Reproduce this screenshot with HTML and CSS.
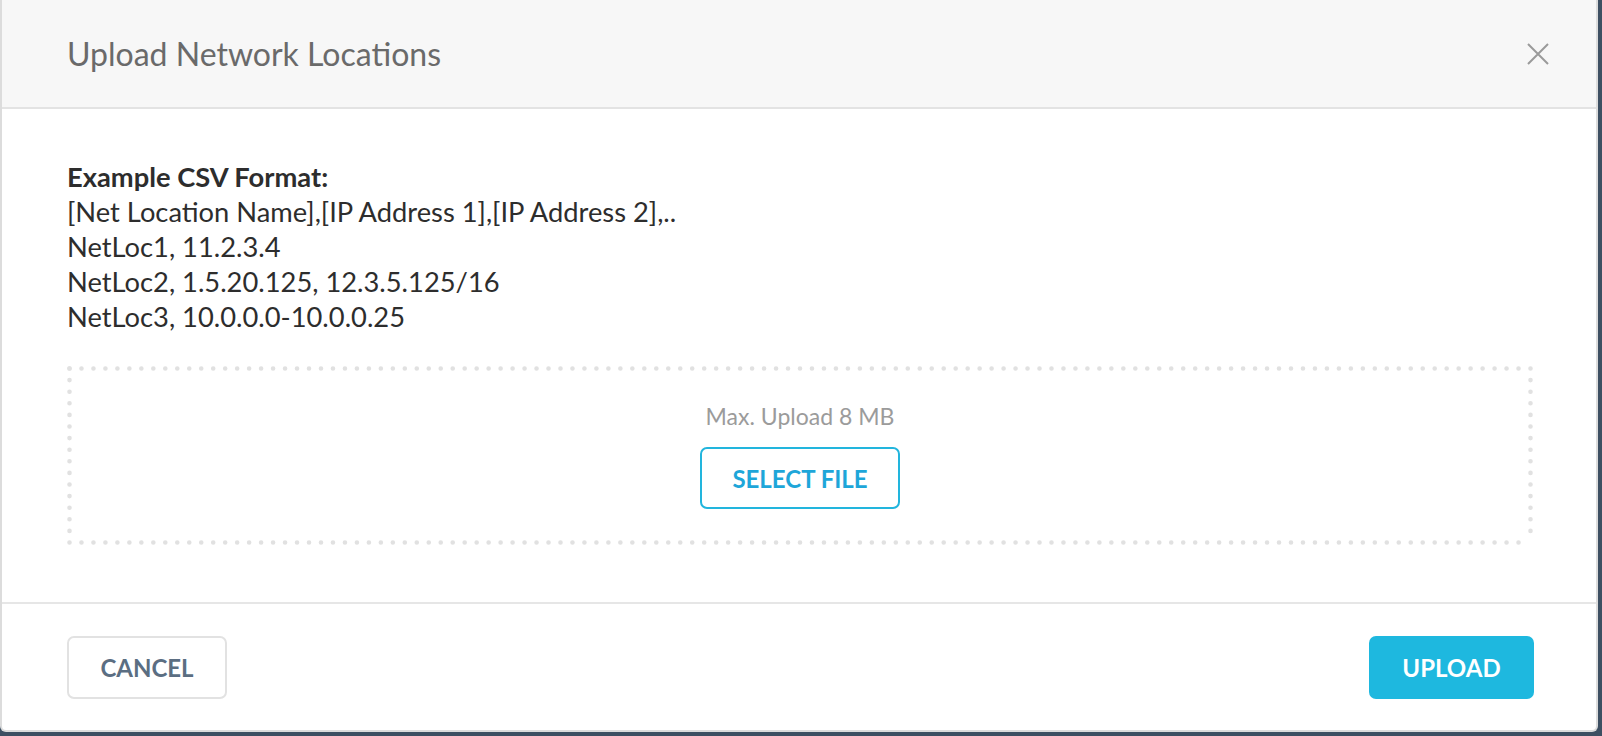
FILE: index.html
```html
<!DOCTYPE html>
<html lang="en">
<head>
<meta charset="utf-8">
<title>Upload Network Locations</title>
<link rel="stylesheet" href="styles.css">
</head>
<body>
<div class="modal">
  <div class="modal-header">
    <h1 class="modal-title">Upload Network Locations</h1>
    <button class="close-btn" aria-label="Close">
      <svg width="22" height="22" viewBox="0 0 22 22"><path d="M1 1 L21 21 M21 1 L1 21" stroke="#9a9a9a" stroke-width="2" fill="none"/></svg>
    </button>
  </div>
  <div class="modal-body">
    <div class="csv-example">
      <div class="csv-title">Example CSV Format:</div>
      <div>[Net Location Name],[IP Address 1],[IP Address 2],..</div>
      <div>NetLoc1, 11.2.3.4</div>
      <div>NetLoc2, 1.5.20.125, 12.3.5.125/16</div>
      <div>NetLoc3, 10.0.0.0-10.0.0.25</div>
    </div>
    <div class="dropzone">
      <svg class="dz-dots" width="1466" height="179" viewBox="0 0 1466 179">
        <g stroke="#e1e1e1" stroke-width="4.6" stroke-linecap="round" stroke-dasharray="0 1" fill="none">
          <line x1="2.5" y1="2.5" x2="1463.5" y2="2.5" pathLength="122"/>
          <line x1="2.5" y1="176.5" x2="1463.5" y2="176.5" pathLength="122"/>
          <line x1="2.5" y1="2.5" x2="2.5" y2="176.5" pathLength="15"/>
          <line x1="1463.5" y1="2.5" x2="1463.5" y2="176.5" pathLength="15"/>
        </g>
      </svg>
      <div class="dz-hint">Max. Upload 8 MB</div>
      <button class="btn btn-outline">SELECT FILE</button>
    </div>
  </div>
  <div class="modal-footer">
    <button class="btn btn-cancel">CANCEL</button>
    <button class="btn btn-primary">UPLOAD</button>
  </div>
</div>
</body>
</html>
```
FILE: styles.css
```css
html, body {
  margin: 0;
  padding: 0;
}
body {
  background: #3d4f62;
  width: 1602px;
  height: 736px;
  overflow: hidden;
  font-family: Lato, "Open Sans", "Liberation Sans", sans-serif;
}
.modal {
  box-sizing: border-box;
  width: 1598px;
  height: 732px;
  background: #fff;
  border: 2px solid #dcdcdc;
  border-top: none;
  border-radius: 0 0 6px 6px;
  display: flex;
  flex-direction: column;
  overflow: hidden;
}
.modal-header {
  box-sizing: border-box;
  height: 109px;
  flex: none;
  background: #f7f7f7;
  border-bottom: 2px solid #e3e3e3;
  display: flex;
  align-items: center;
  justify-content: space-between;
  padding: 0 47px 0 65px;
}
.modal-title {
  margin: 0;
  font-size: 32px;
  font-weight: 400;
  color: #6a6a6a;
  line-height: 1;
}
.close-btn {
  border: none;
  background: none;
  padding: 0;
  width: 22px;
  height: 22px;
  display: flex;
}
.modal-body {
  flex: 1;
  padding: 50px 63px 0 65px;
}
.csv-example {
  font-size: 27.3px;
  line-height: 35px;
  color: #2d2d2d;
}
.csv-title {
  font-weight: 700;
}
.dropzone {
  position: relative;
  margin-top: 32px;
  height: 179px;
  box-sizing: border-box;
  padding-top: 38px;
  display: flex;
  flex-direction: column;
  align-items: center;
}
.dz-dots {
  position: absolute;
  left: 0;
  top: 0;
}
.dz-hint {
  font-size: 23px;
  line-height: 24px;
  color: #9b9b9b;
}
.btn {
  box-sizing: border-box;
  font-family: Lato, "Open Sans", "Liberation Sans", sans-serif;
  font-weight: 700;
  font-size: 24px;
  height: 63px;
  border-radius: 7px;
  cursor: pointer;
}
.btn-outline {
  margin-top: 19px;
  width: 200px;
  height: 62px;
  background: #fff;
  border: 2px solid #22b5dd;
  color: #1ea6d9;
}
.modal-footer {
  flex: none;
  height: 128px;
  box-sizing: border-box;
  border-top: 2px solid #e6e6e6;
  display: flex;
  align-items: center;
  justify-content: space-between;
  padding: 0 62px 0 65px;
}
.btn-cancel {
  width: 160px;
  background: #fff;
  border: 2px solid #e2e2e2;
  color: #5b6e82;
}
.btn-primary {
  width: 165px;
  background: #1eb8df;
  border: none;
  color: #fff;
}
```
